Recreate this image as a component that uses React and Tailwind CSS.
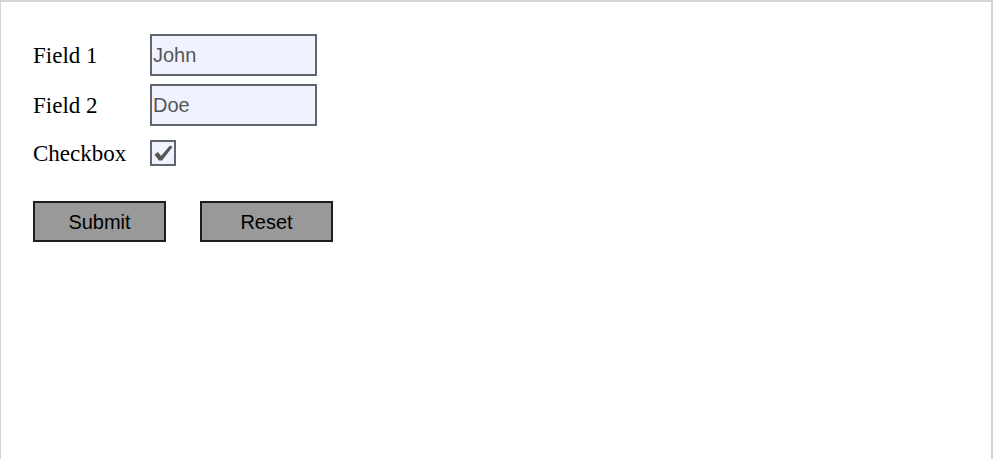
export default function App() {
  return (
    <div className="w-[993px] h-[459px] bg-white border-t-2 border-l border-r-2 border-[#d4d4d4] pl-[32px] pt-[32px]">
      <form className="flex flex-col" onSubmit={(e) => e.preventDefault()}>
        {/* Text fields */}
        <div className="flex items-center h-[42px]">
          <label className="w-[117px] pt-[3px] text-[23px] text-black font-['Liberation_Serif',serif]">Field 1</label>
          <input
            defaultValue="John"
            className="w-[167px] h-[42px] border-2 border-[#60656e] bg-[#f0f3fe] px-[1px] text-[20px] text-[#555] font-['Liberation_Sans',sans-serif] outline-none"
          />
        </div>
        <div className="flex items-center h-[42px] mt-[8px]">
          <label className="w-[117px] pt-[3px] text-[23px] text-black font-['Liberation_Serif',serif]">Field 2</label>
          <input
            defaultValue="Doe"
            className="w-[167px] h-[42px] border-2 border-[#60656e] bg-[#f0f3fe] px-[1px] text-[20px] text-[#555] font-['Liberation_Sans',sans-serif] outline-none"
          />
        </div>

        {/* Checkbox */}
        <div className="flex items-center h-[26px] mt-[14px]">
          <label className="w-[117px] pt-[3px] text-[23px] text-black font-['Liberation_Serif',serif]">Checkbox</label>
          <span className="w-[26px] h-[26px] border-2 border-[#60656e] bg-[#f0f3fe] flex items-center justify-center">
            <svg width="20" height="18" viewBox="0 0 20 18">
              <path d="M1.5 10.5 L5 8 L8 12 L17 1.5 L19.5 3 L9 16.5 L6 16.5 Z" fill="#555" />
            </svg>
          </span>
        </div>

        {/* Buttons */}
        <div className="flex gap-[34px] mt-[35px]">
          <button className="w-[133px] h-[41px] border-2 border-[#1e1e1e] bg-[#999999] text-[20px] text-black font-['Liberation_Sans',sans-serif]">
            Submit
          </button>
          <button type="reset" className="w-[133px] h-[41px] border-2 border-[#1e1e1e] bg-[#999999] text-[20px] text-black font-['Liberation_Sans',sans-serif]">
            Reset
          </button>
        </div>
      </form>
    </div>
  );
}
